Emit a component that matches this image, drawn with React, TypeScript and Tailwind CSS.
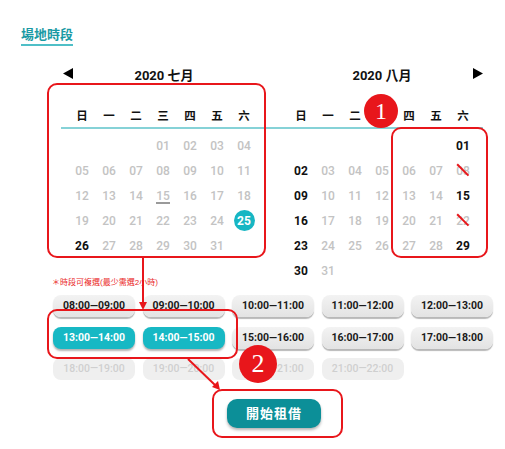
import React from 'react'

type Cell = { d: number | null; kind?: 'gray' | 'bold' | 'selected' | 'today' | 'slash' }

const WEEK = ['日', '一', '二', '三', '四', '五', '六']

function buildMonth(offset: number, days: number, kindOf: (d: number) => Cell['kind']): Cell[] {
  const cells: Cell[] = []
  for (let i = 0; i < offset; i++) cells.push({ d: null })
  for (let d = 1; d <= days; d++) cells.push({ d, kind: kindOf(d) })
  return cells
}

const july = buildMonth(3, 31, (d) => {
  if (d === 25) return 'selected'
  if (d === 15) return 'today'
  if (d === 26) return 'bold'
  return 'gray'
})

const augBold = [1, 2, 9, 15, 16, 23, 29, 30]
const august = buildMonth(6, 31, (d) => {
  if (augBold.includes(d)) return 'bold'
  if (d === 8 || d === 22) return 'slash'
  return 'gray'
})

const pad = (n: number) => (n < 10 ? '0' + n : '' + n)

function DayCell({ cell }: { cell: Cell }) {
  if (cell.d === null) return <div className="h-[25px]" />
  const label = pad(cell.d)
  if (cell.kind === 'selected') {
    return (
      <div className="flex h-[25px] items-center justify-center">
        <span className="flex h-[21px] w-[21px] items-center justify-center rounded-full bg-[#17b6c3] text-[12px] font-bold text-white">
          {label}
        </span>
      </div>
    )
  }
  if (cell.kind === 'bold') {
    return (
      <div className="flex h-[25px] items-center justify-center text-[12px] font-bold text-[#111]">{label}</div>
    )
  }
  if (cell.kind === 'today') {
    return (
      <div className="flex h-[25px] items-center justify-center">
        <span className="relative text-[12px] font-medium text-[#c3c3c3]">
          {label}
          <span className="absolute left-[0px] right-[0px] top-[15px] h-[2px] bg-[#9a9a9a]" />
        </span>
      </div>
    )
  }
  if (cell.kind === 'slash') {
    return (
      <div className="flex h-[25px] items-center justify-center">
        <span className="relative text-[12px] font-medium text-[#c3c3c3]">
          {label}
          <span className="absolute left-[-1px] top-[7px] h-[1.5px] w-[16px] rotate-45 bg-[#e8161b]" />
        </span>
      </div>
    )
  }
  return (
    <div className="flex h-[25px] items-center justify-center text-[12px] font-medium text-[#c3c3c3]">{label}</div>
  )
}

function Arrow({ dir }: { dir: 'left' | 'right' }) {
  return (
    <svg width="10" height="11" viewBox="0 0 10 11" className="-mt-[5px] shrink-0">
      {dir === 'left' ? <polygon points="10,0 10,11 0,5.5" fill="#000" /> : <polygon points="0,0 0,11 10,5.5" fill="#000" />}
    </svg>
  )
}

function MonthGrid({ cells, className }: { cells: Cell[]; className: string }) {
  return (
    <div className={`grid w-[189px] grid-cols-7 pt-[4px] ${className}`}>
      {cells.map((c, i) => (
        <DayCell key={i} cell={c} />
      ))}
    </div>
  )
}

function Weekdays({ className }: { className: string }) {
  return (
    <div className="h-[40px] border-b-2 border-[#86d2d7] pt-[20px]">
      <div className={`grid w-[189px] grid-cols-7 ${className}`}>
        {WEEK.map((w) => (
          <div key={w} className="text-center text-[11.5px] font-bold leading-[14px] text-[#111]">
            {w}
          </div>
        ))}
      </div>
    </div>
  )
}

type Slot = { t: string; state: 'normal' | 'active' | 'disabled' }

const slots: Slot[] = [
  { t: '08:00—09:00', state: 'normal' },
  { t: '09:00—10:00', state: 'normal' },
  { t: '10:00—11:00', state: 'normal' },
  { t: '11:00—12:00', state: 'normal' },
  { t: '12:00—13:00', state: 'normal' },
  { t: '13:00—14:00', state: 'active' },
  { t: '14:00—15:00', state: 'active' },
  { t: '15:00—16:00', state: 'normal' },
  { t: '16:00—17:00', state: 'normal' },
  { t: '17:00—18:00', state: 'normal' },
  { t: '18:00—19:00', state: 'disabled' },
  { t: '19:00—20:00', state: 'disabled' },
  { t: '20:00—21:00', state: 'disabled' },
  { t: '21:00—22:00', state: 'disabled' },
]

function SlotButton({ slot }: { slot: Slot }) {
  const base = 'flex h-[22px] w-[82px] items-center justify-center rounded-[8px] text-[10.5px]'
  if (slot.state === 'active') {
    return (
      <div className={`${base} bg-[#17b8c4] font-bold text-white shadow-[0_2px_2px_rgba(0,0,0,0.3)]`}>{slot.t}</div>
    )
  }
  if (slot.state === 'disabled') {
    return <div className={`${base} bg-[#efefef] font-medium text-[#cfcfcf]`}>{slot.t}</div>
  }
  return (
    <div className={`${base} bg-gradient-to-b from-[#f3f3f3] to-[#e3e3e3] font-bold text-[#1a1a1a] shadow-[0_2px_1px_rgba(0,0,0,0.28)]`}>
      {slot.t}
    </div>
  )
}

export default function App() {
  return (
    <div className="relative h-[449px] w-[505px] overflow-hidden bg-white font-['Roboto','Noto_Sans_CJK_TC',sans-serif]">
      {/* Title */}
      <div className="pl-[21px] pt-[22px]">
        <span className="inline-block border-b-2 border-[#4fbfc7] pb-[1px] text-[13px] font-bold leading-[16px] text-[#1a9aa4]">
          場地時段
        </span>
      </div>

      {/* Calendars */}
      <div className="ml-[61px] mt-[17px] flex w-[422px]">
        <div className="w-[211px]">
          <div className="flex h-[26px] items-center">
            <div className="ml-[2px]">
              <Arrow dir="left" />
            </div>
            <div className="w-[182px] text-center text-[13px] font-bold text-[#111]">2020 七月</div>
          </div>
          <Weekdays className="ml-[7.5px]" />
          <MonthGrid cells={july} className="ml-[7.5px]" />
        </div>
        <div className="w-[211px]">
          <div className="flex h-[26px] items-center">
            <div className="ml-[19px] w-[182px] text-center text-[13px] font-bold text-[#111]">2020 八月</div>
            <Arrow dir="right" />
          </div>
          <Weekdays className="ml-[15.5px]" />
          <MonthGrid cells={august} className="ml-[15.5px]" />
        </div>
      </div>

      {/* Time slots */}
      <div className="-mt-[5px] ml-[52px] text-[8px] leading-[10px] text-[#ea2a2a]">＊時段可複選(最少需選2小時)</div>
      <div className="ml-[53px] mt-[7px] grid w-[440px] grid-cols-5 gap-x-[7.5px] gap-y-[9.5px]">
        {slots.map((s) => (
          <SlotButton key={s.t} slot={s} />
        ))}
      </div>

      <div className="ml-[227px] mt-[19px] flex h-[29px] w-[94px] items-center justify-center rounded-[10px] bg-[#0c8f98] text-[13px] font-bold tracking-[1px] text-white shadow-[0_2px_3px_rgba(0,0,0,0.3)]">
        開始租借
      </div>

      {/* Annotations */}
      <div className="pointer-events-none absolute left-[47px] top-[83px] h-[175px] w-[219px] rounded-[10px] border-[2.5px] border-[#e8161b]" />
      <div className="pointer-events-none absolute left-[391px] top-[127px] h-[131px] w-[97px] rounded-[10px] border-[2.5px] border-[#e8161b]" />
      <div className="pointer-events-none absolute left-[47px] top-[309px] h-[50px] w-[191px] rounded-[10px] border-[2.5px] border-[#e8161b]" />
      <div className="pointer-events-none absolute left-[212px] top-[389px] h-[49px] w-[131px] rounded-[10px] border-[2.5px] border-[#e8161b]" />

      <svg className="pointer-events-none absolute left-0 top-0" width="505" height="449">
        <line x1="143" y1="258" x2="143" y2="303" stroke="#e8161b" strokeWidth="2" />
        <polygon points="139,302 147,302 143,310" fill="#e8161b" />
        <line x1="188" y1="359" x2="215" y2="385" stroke="#e8161b" strokeWidth="2" />
        <polygon points="212,387 218,381 220,390" fill="#e8161b" />
      </svg>

      <div className="absolute left-[364px] top-[94px] flex h-[34px] w-[34px] items-center justify-center rounded-full bg-[#e8161b] font-['Liberation_Serif',serif] text-[24px] leading-none text-white">
        1
      </div>
      <div className="absolute left-[239px] top-[345px] flex h-[38px] w-[38px] items-center justify-center rounded-full bg-[#e8161b] font-['Liberation_Serif',serif] text-[26px] leading-none text-white">
        2
      </div>
    </div>
  )
}
